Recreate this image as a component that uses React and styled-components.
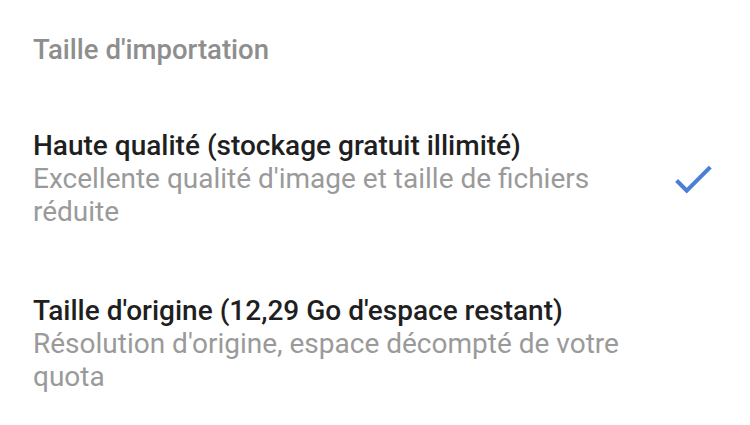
import React from "react";
import styled, { createGlobalStyle } from "styled-components";

const GlobalStyle = createGlobalStyle`
  body {
    margin: 0;
    background: #ffffff;
    font-family: Roboto, "Noto Sans", sans-serif;
  }
`;

const Page = styled.section`
  padding: 33px 32px 0 33px;
`;

const Header = styled.h2`
  margin: 0 0 30px 0;
  font-size: 27.5px;
  font-weight: 500;
  line-height: 33px;
  color: #8e8e8e;
`;

const Option = styled.div`
  display: flex;
  align-items: center;
  justify-content: space-between;
  padding: 33px 0;
`;

const OptionText = styled.div`
  display: flex;
  flex-direction: column;
  max-width: 600px;
`;

const Title = styled.div`
  font-size: 28px;
  font-weight: 500;
  line-height: 33px;
  color: #1f1f1f;
`;

const Subtitle = styled.div`
  font-size: 28px;
  font-weight: 400;
  line-height: 33px;
  color: #9a9a9a;
`;

const CheckIcon = styled.svg`
  width: 50px;
  height: 50px;
  flex-shrink: 0;
  fill: #4b7fd5;
`;

const options = [
  {
    title: "Haute qualité (stockage gratuit illimité)",
    subtitle: "Excellente qualité d'image et taille de fichiers réduite",
    selected: true
  },
  {
    title: "Taille d'origine (12,29 Go d'espace restant)",
    subtitle: "Résolution d'origine, espace décompté de votre quota",
    selected: false
  }
];

export default function App() {
  return (
    <Page>
      <GlobalStyle />
      <Header>Taille d'importation</Header>
      {options.map(opt => (
        <Option key={opt.title}>
          <OptionText>
            <Title>{opt.title}</Title>
            <Subtitle>{opt.subtitle}</Subtitle>
          </OptionText>
          {opt.selected ? (
            <CheckIcon viewBox="0 0 24 24">
              <path d="M9 16.17L4.83 12l-1.42 1.41L9 19 21 7l-1.41-1.41z" />
            </CheckIcon>
          ) : null}
        </Option>
      ))}
    </Page>
  );
}
